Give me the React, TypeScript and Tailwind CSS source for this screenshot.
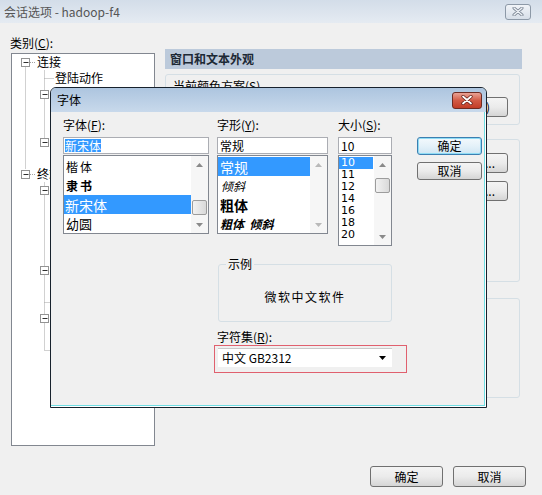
import React from "react";

type Row = { level: number; text: string };

// rows hidden behind the font dialog carry no text
const treeRows: Row[] = [
  { level: 0, text: "连接" },
  { level: 1, text: "登陆动作" },
  { level: 1, text: "" },
  { level: 2, text: "" },
  { level: 2, text: "" },
  { level: 1, text: "" },
  { level: 2, text: "" },
  { level: 0, text: "终端" },
  { level: 1, text: "" },
  { level: 2, text: "" },
  { level: 2, text: "" },
  { level: 2, text: "" },
  { level: 2, text: "" },
  { level: 1, text: "" },
  { level: 2, text: "" },
  { level: 1, text: "" },
  { level: 1, text: "" },
  { level: 2, text: "" },
  { level: 1, text: "" },
];

const padByLevel = ["pl-[25px]", "pl-[43px]", "pl-[61px]"];

function Btn({
  children,
  className = "",
  focus = false,
}: {
  children: React.ReactNode;
  className?: string;
  focus?: boolean;
}) {
  return (
    <div
      className={`flex items-center rounded-[3px] border text-[12px] leading-[14px] ${
        focus
          ? "border-[#3c7fb1] bg-linear-to-b from-[#f3f9fd] via-[#e4f1f9] to-[#cfe6f3] shadow-[inset_0_0_0_1px_#8fdcf5]"
          : "border-[#707070] bg-linear-to-b from-[#f4f4f4] via-[#ebebeb] to-[#d5d5d5]"
      } ${className}`}
    >
      {children}
    </div>
  );
}

function Arrow({ up, color }: { up?: boolean; color: string }) {
  return (
    <svg width="7" height="4" viewBox="0 0 7 4">
      <path d={up ? "M0 4L3.5 0L7 4Z" : "M0 0L7 0L3.5 4Z"} fill={color} />
    </svg>
  );
}

function VScroll({ thumb, disabled }: { thumb?: string; disabled?: boolean }) {
  const c = disabled ? "#b9b9b9" : "#8a8a8a";
  return (
    <div className="flex w-[17px] flex-col bg-[#f6f6f6]">
      <div className="flex h-[17px] items-center justify-center">
        <Arrow up color={c} />
      </div>
      <div className="flex flex-1 flex-col">
        {thumb ? (
          <div
            className={`mx-[1px] h-[15px] rounded-[2px] border border-[#9c9c9c] bg-linear-to-r from-[#f2f2f2] to-[#d9d9d9] ${thumb}`}
          />
        ) : null}
      </div>
      <div className="flex h-[17px] items-center justify-center">
        <Arrow color={c} />
      </div>
    </div>
  );
}

function Tree() {
  const dot = { stroke: "#a3a3a3", strokeWidth: 1, strokeDasharray: "1 1" };
  const box = (cx: number, cy: number) => (
    <g key={`${cx}-${cy}`}>
      <rect x={cx - 4} y={cy - 4} width="8" height="8" fill="#fff" stroke="#939393" />
      <line x1={cx - 2} y1={cy} x2={cx + 3} y2={cy} stroke="#303030" />
    </g>
  );
  const cy = (k: number) => 8.5 + 16 * k;
  return (
    <div className="relative mt-[3px] h-[393px] w-[144px] border border-[#828790] bg-white">
      <svg className="absolute left-0 top-0" width="142" height="391">
        <line x1="13.5" y1={cy(0) + 5} x2="13.5" y2={cy(7) - 5} {...dot} />
        <line x1="18" y1={cy(0)} x2="23" y2={cy(0)} {...dot} />
        <line x1="18" y1={cy(7)} x2="23" y2={cy(7)} {...dot} />
        <line x1="32.5" y1={cy(0) + 8} x2="32.5" y2={cy(5) - 5} {...dot} />
        <line x1="32.5" y1={cy(1)} x2="42" y2={cy(1)} {...dot} />
        <line x1="32.5" y1={cy(7) + 8} x2="32.5" y2={cy(18)} {...dot} />
        <line x1="32.5" y1={cy(15)} x2="42" y2={cy(15)} {...dot} />
        <line x1="32.5" y1={cy(18)} x2="42" y2={cy(18)} {...dot} />
        {[0, 7].map((k) => box(13.5, cy(k)))}
        {[2, 5, 8, 13, 16].map((k) => box(32.5, cy(k)))}
      </svg>
      <div className="relative flex flex-col">
        {treeRows.map((r, i) => (
          <div
            key={i}
            className={`flex h-[16px] items-center whitespace-nowrap ${padByLevel[r.level]}`}
          >
            {r.text}
          </div>
        ))}
      </div>
    </div>
  );
}

function Mn({ c }: { c: string }) {
  return (
    <>
      (<span className="underline underline-offset-1">{c}</span>):
    </>
  );
}

function FontDialog() {
  return (
    <div className="absolute left-[50px] top-[87px] flex h-[321px] w-[437px] flex-col overflow-hidden rounded-t-[6px] border border-[#17212c] bg-[#f0f0f0] shadow-[inset_-1px_-1px_0_#ffffff,inset_-2px_-2px_0_#6fdde3]">
      <div className="flex h-[24px] items-center justify-between bg-linear-to-b from-[#adc5df] to-[#c8d9eb] pl-[6px] pr-[4px]">
        <span className="text-[12px]">字体</span>
        <div className="flex h-[17px] w-[30px] items-center justify-center rounded-[3px] border border-[#6e2b22] bg-linear-to-b from-[#e9a295] via-[#d25a45] to-[#c23c26]">
          <svg width="12" height="10" viewBox="0 0 12 10">
            <path d="M2 1.5L10 8.5M10 1.5L2 8.5" stroke="#5c1b14" strokeWidth="3.2" strokeLinecap="round" />
            <path d="M2 1.5L10 8.5M10 1.5L2 8.5" stroke="#ffffff" strokeWidth="1.8" strokeLinecap="round" />
          </svg>
        </div>
      </div>

      <div className="flex pl-[12px] pt-[6px]">
        {/* font family */}
        <div className="flex w-[146px] flex-col">
          <div className="h-[14px] whitespace-nowrap">
            字体<Mn c="F" />
          </div>
          <div className="mt-[5px] flex h-[17px] items-center border border-[#abadb3] bg-white pl-[1px]">
            <span className="bg-[#3399ff] leading-[13px] text-white">新宋体</span>
          </div>
          <div className="mt-[1px] flex h-[79px] border border-[#828790] bg-white">
            <div className="flex flex-1 flex-col pt-[1px]">
              <div className="flex h-[19px] items-center pl-[2px] tracking-[2px]">楷体</div>
              <div className="flex h-[19px] items-center pl-[2px] font-bold tracking-[2px]">隶书</div>
              <div className="flex h-[19px] items-center bg-[#3399ff] pl-[1px] text-[14px] text-white">新宋体</div>
              <div className="flex h-[19px] items-center pl-[2px] text-[13px]">幼圆</div>
            </div>
            <VScroll thumb="mt-[27px]" />
          </div>
        </div>

        <div className="ml-[8px] flex flex-col">
          <div className="flex">
            {/* style */}
            <div className="flex w-[111px] flex-col">
              <div className="h-[14px] whitespace-nowrap">
                字形<Mn c="Y" />
              </div>
              <div className="mt-[5px] flex h-[17px] items-center border border-[#abadb3] bg-white pl-[2px]">
                常规
              </div>
              <div className="mt-[1px] flex h-[79px] border border-[#828790] bg-white">
                <div className="flex flex-1 flex-col pt-[1px]">
                  <div className="flex h-[19px] items-center bg-[#3399ff] pl-[2px] text-[14px] text-white">常规</div>
                  <div className="flex h-[19px] items-center pl-[3px] italic">倾斜</div>
                  <div className="flex h-[19px] items-center pl-[2px] text-[14px] font-bold">粗体</div>
                  <div className="flex h-[19px] items-center pl-[2px] font-bold italic">
                    粗体&nbsp;&nbsp;倾斜
                  </div>
                </div>
                <VScroll disabled />
              </div>
            </div>

            {/* size */}
            <div className="ml-[10px] flex w-[54px] flex-col">
              <div className="h-[14px] whitespace-nowrap">
                大小<Mn c="S" />
              </div>
              <div className="mt-[5px] flex h-[17px] items-center border border-[#abadb3] bg-white pl-[2px]">
                10
              </div>
              <div className="mt-[1px] flex h-[91px] border border-[#828790] bg-white">
                <div className="flex flex-1 flex-col pt-[1px] font-['DejaVu_Sans',sans-serif] text-[11px] leading-[12px]">
                  {["10", "11", "12", "14", "16", "18", "20"].map((s, i) => (
                    <div
                      key={s}
                      className={`flex h-[12px] items-center pl-[2px] ${
                        i === 0 ? "mr-[1px] bg-[#3399ff] text-white" : ""
                      }`}
                    >
                      {s}
                    </div>
                  ))}
                </div>
                <VScroll thumb="mt-[5px]" />
              </div>
            </div>
          </div>

          {/* sample */}
          <div className="relative ml-[1px] mt-[18px] flex h-[58px] w-[174px] items-center justify-center rounded-[3px] border border-[#d5dfe5] pt-[8px]">
            <span className="absolute -top-[8px] left-[7px] bg-[#f0f0f0] px-[2px]">示例</span>
            <span className="tracking-[1.5px]">微软中文软件</span>
          </div>

          <div className="mt-[8px] h-[14px] whitespace-nowrap">
            字符集<Mn c="R" />
          </div>
          <div className="-ml-[3px] mt-[1px] h-[28px] w-[193px] border border-[#e0606e] pl-[3px] pt-[2px]">
            <div className="flex h-[19px] w-[174px] items-center justify-between border-t border-[#c9c9c9] bg-white pl-[4px] pr-[6px]">
              <span>中文 GB2312</span>
              <Arrow color="#000" />
            </div>
          </div>
        </div>

        {/* buttons */}
        <div className="ml-[10px] flex flex-col gap-[7px] pt-[19px]">
          <Btn focus className="h-[18px] w-[65px] justify-center">确定</Btn>
          <Btn className="h-[18px] w-[65px] justify-center">取消</Btn>
        </div>
      </div>
    </div>
  );
}

export default function App() {
  return (
    <div className="relative h-[495px] w-[542px] overflow-hidden bg-[#f0f0f0] font-['Noto_Sans_CJK_SC',sans-serif] text-[12px] leading-[14px] text-black">
      <div className="flex h-[23px] items-center justify-between bg-linear-to-b from-[#d3dde9] to-[#e5ebf2] pl-[4px] pr-[11px]">
        <span className="text-[12px] text-[#555]">会话选项 - hadoop-f4</span>
        <div className="flex h-[16px] w-[26px] items-center justify-center rounded-[3px] border border-[#8d99a7] bg-linear-to-b from-[#f1f4f8] to-[#d7dfe8]">
          <svg width="12" height="9" viewBox="0 0 12 9">
            <path d="M2 1L10 8M10 1L2 8" stroke="#7b8593" strokeWidth="3" strokeLinecap="round" />
            <path d="M2 1L10 8M10 1L2 8" stroke="#eef2f6" strokeWidth="1.4" strokeLinecap="round" />
          </svg>
        </div>
      </div>

      <div className="flex">
        <div className="flex w-[155px] flex-col pl-[11px] pt-[13px]">
          <div className="-ml-[1px] h-[14px]">
            类别<Mn c="C" />
          </div>
          <Tree />
        </div>

        <div className="ml-[10px] flex w-[357px] flex-col pt-[26px]">
          <div className="flex h-[20px] items-center bg-[#bccadb] pl-[5px] font-bold text-[#1d2935]">
            窗口和文本外观
          </div>
          <div className="mr-[2px] mt-[5px] flex h-[51px] flex-col rounded-[3px] border border-[#d5dfe5] pt-[4px]">
            <div className="pl-[7px]">当前颜色方案(S)</div>
            <div className="mt-[4px] flex justify-end pr-[11px]">
              <Btn className="h-[20px] w-[76px] justify-end pr-[17px]">)</Btn>
            </div>
          </div>
          <div className="mr-[2px] mt-[14px] flex h-[143px] flex-col items-end gap-[8px] rounded-[3px] border border-[#d5dfe5] pr-[11px] pt-[13px]">
            <Btn className="h-[20px] w-[80px] justify-end pr-[12px]">...</Btn>
            <Btn className="h-[20px] w-[80px] justify-end pr-[12px]">...</Btn>
          </div>
          <div className="mr-[2px] mt-[16px] h-[100px] rounded-[3px] border border-[#d5dfe5]" />
        </div>
      </div>

      <div className="mt-[20px] flex justify-end gap-[10px] pr-[16px]">
        <Btn className="h-[21px] w-[73px] justify-center">确定</Btn>
        <Btn className="h-[21px] w-[73px] justify-center">取消</Btn>
      </div>

      <FontDialog />
    </div>
  );
}
